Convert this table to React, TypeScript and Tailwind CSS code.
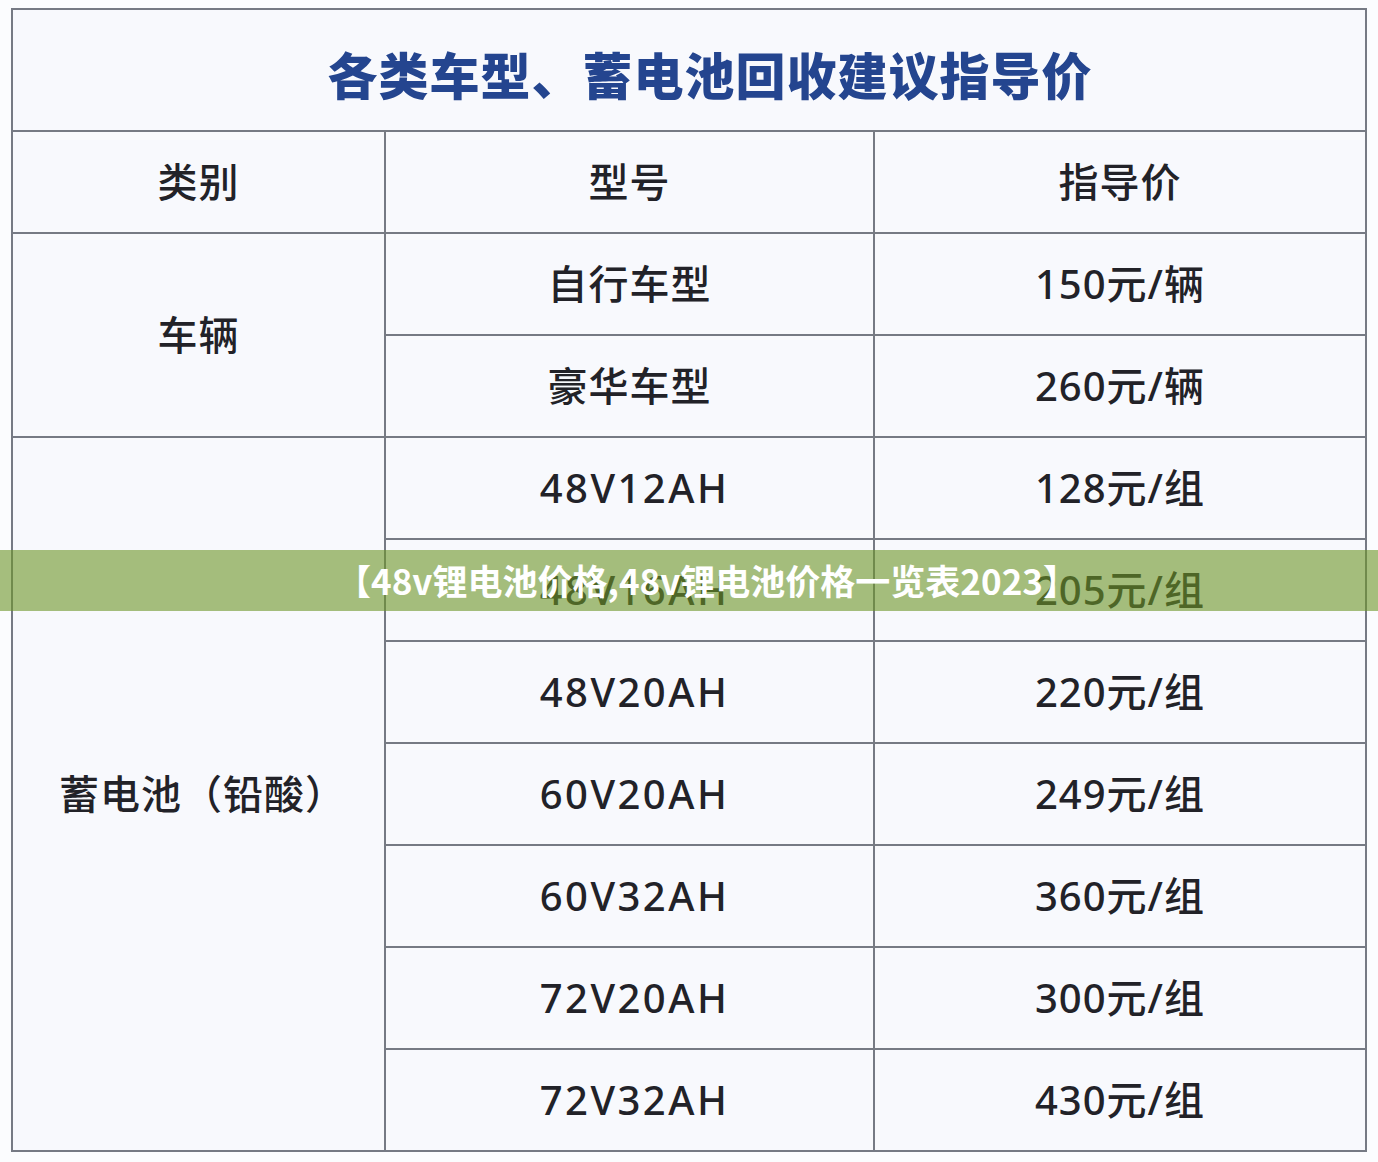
const rows = [
  { model: '自行车型', price: '150元/辆' },
  { model: '豪华车型', price: '260元/辆' },
  { model: '48V12AH', price: '128元/组' },
  { model: '48V16AH', price: '205元/组' },
  { model: '48V20AH', price: '220元/组' },
  { model: '60V20AH', price: '249元/组' },
  { model: '60V32AH', price: '360元/组' },
  { model: '72V20AH', price: '300元/组' },
  { model: '72V32AH', price: '430元/组' },
];

const cell =
  'flex items-center justify-center bg-[#f8f9fd] text-[40px] font-medium tracking-[1px] text-[#222228]';

export default function App() {
  return (
    <div className="relative min-h-screen bg-[#fbfcfe] pl-[11px] pt-[8px] font-['Noto_Sans','Noto_Sans_CJK_SC',sans-serif]">
      <div className="grid w-[1356px] grid-cols-[371px_487px_1fr] grid-rows-[120px_100px_repeat(9,100px)] gap-[2px] bg-[#767a84] p-[2px]">
        <div className="col-span-3 flex items-center justify-center bg-[#f8f9fd] pl-[42px] pt-[6px] text-[50px] font-black tracking-[1px] text-[#24458f] font-['Noto_Sans_CJK_SC',sans-serif]">
          各类车型、蓄电池回收建议指导价
        </div>

        <div className={cell}>类别</div>
        <div className={cell}>型号</div>
        <div className={cell}>指导价</div>

        <div className={`${cell} row-span-2`}>车辆</div>
        <div className={cell}>{rows[0].model}</div>
        <div className={cell}>{rows[0].price}</div>
        <div className={cell}>{rows[1].model}</div>
        <div className={cell}>{rows[1].price}</div>

        <div className={`${cell} row-span-7 pl-[8px]`}>蓄电池（铅酸）</div>
        {rows.slice(2).map((r) => (
          <div key={r.model} className="contents">
            <div className={`${cell} pl-[10px] tracking-[2.5px]`}>{r.model}</div>
            <div className={cell}>{r.price}</div>
          </div>
        ))}
      </div>

      {/* watermark banner laid over the table */}
      <div className="absolute left-0 right-0 top-[550px] flex h-[61px] items-center justify-center bg-[#6d9526]/60 pl-[36px]">
        <span className="text-[35px] font-bold text-white font-['Noto_Sans_CJK_SC',sans-serif]">
          【48v锂电池价格,48v锂电池价格一览表2023】
        </span>
      </div>
    </div>
  );
}
